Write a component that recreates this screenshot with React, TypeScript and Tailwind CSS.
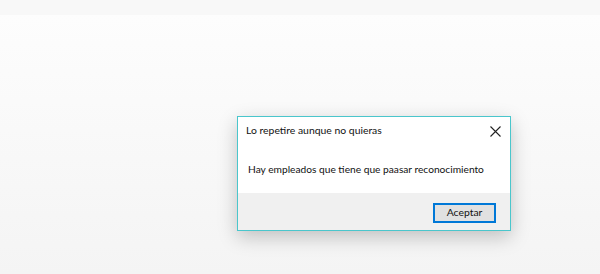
import React from "react";

export default function App() {
  return (
    <div className="w-[600px] h-[274px] flex flex-col overflow-hidden" style={{ fontFamily: 'Lato, "Noto Sans", sans-serif' }}>
      <div className="h-[15px] bg-[#f8f8f8] shrink-0" />
      <div className="flex-1 bg-gradient-to-b from-[#fdfdfd] to-[#f4f4f4] pl-[237px] pt-[101px]">
        <div className="w-[274px] h-[115px] border border-[#4ac6cc] bg-white flex flex-col shadow-[0_6px_18px_rgba(0,0,0,0.22)]">
          <div className="h-[28px] flex items-center justify-between pl-[8px] pr-[9px] shrink-0">
            <span className="text-[10.4px] text-[#111] mt-[0px] whitespace-nowrap">Lo repetire aunque no quieras</span>
            <svg width="11" height="11" viewBox="0 0 11 11" className="mt-[1px]">
              <path d="M0.5 0.5L10.5 10.5M10.5 0.5L0.5 10.5" stroke="#222" strokeWidth="1.1" />
            </svg>
          </div>
          <div className="h-[48px] flex items-center pl-[10px] shrink-0">
            <span className="text-[10.2px] text-[#111] mt-[2px] whitespace-nowrap">Hay empleados que tiene que paasar reconocimiento</span>
          </div>
          <div className="flex-1 bg-[#f0f0f0] flex items-center justify-end pr-[14px]">
            <div className="w-[63px] h-[20px] border-2 border-[#0078d7] bg-[#e1e1e1] flex items-center justify-center text-[10.4px] text-[#111] mt-[2px]">
              Aceptar
            </div>
          </div>
        </div>
      </div>
    </div>
  );
}
